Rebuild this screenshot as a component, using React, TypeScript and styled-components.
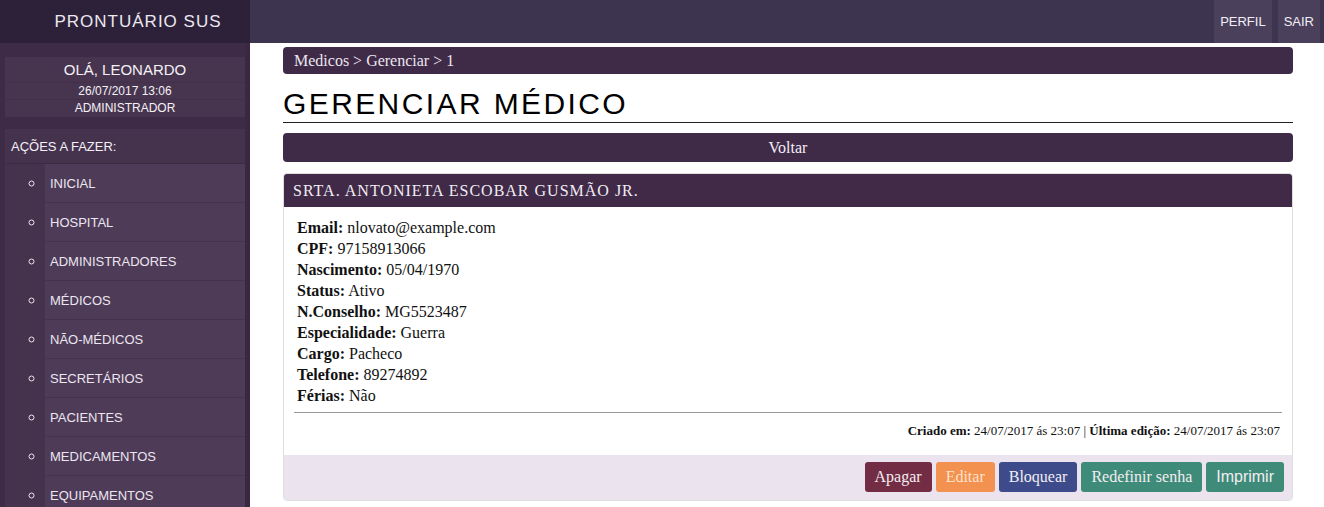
import React from "react";
import styled, { createGlobalStyle } from "styled-components";

const GlobalStyle = createGlobalStyle`
  html, body {
    margin: 0;
    padding: 0;
    background: #fff;
  }
  body {
    font-family: "Liberation Serif", "Times New Roman", serif;
  }
`;

// estrutura geral
const Page = styled.div`
  display: grid;
  grid-template-columns: 250px 1fr;
  grid-template-rows: 43px 1fr;
  width: 1324px;
  height: 507px;
  overflow: hidden;
`;

// barra superior
const Brand = styled.div`
  background: #2c2139;
  color: #ece8f0;
  font-family: "Liberation Sans", Arial, sans-serif;
  font-size: 17px;
  letter-spacing: 1px;
  display: flex;
  align-items: center;
  justify-content: center;
  padding-left: 26px;
`;

const TopBar = styled.nav`
  background: #3d3450;
  display: flex;
  justify-content: flex-end;
  align-items: stretch;
  padding-right: 4px;
  gap: 6px;
`;

const TopLink = styled.a`
  background: #4a405c;
  color: #f2eff5;
  font-family: "Liberation Sans", Arial, sans-serif;
  font-size: 13px;
  display: flex;
  align-items: center;
  padding: 0 6px;
  text-decoration: none;
`;

// menu lateral
const Sidebar = styled.aside`
  background: #3e2b47;
  border-right: 5px solid #3a2843;
  padding: 14px 0 0 5px;
  color: #f4f0f6;
  font-family: "Liberation Sans", Arial, sans-serif;
  overflow: hidden;
`;

const UserBox = styled.div`
  background: #47354f;
  text-align: center;
  margin-bottom: 12px;
`;

const UserRow = styled.div<{ $big?: boolean }>`
  font-size: ${(p) => (p.$big ? "15px" : "12px")};
  height: ${(p) => (p.$big ? "25px" : "16px")};
  line-height: ${(p) => (p.$big ? "26px" : "16px")};
  border-bottom: 1px solid #42304a;
  &:last-child {
    border-bottom: none;
    height: 17px;
  }
`;

const ActionsTitle = styled.div`
  background: #45334e;
  font-size: 13px;
  height: 34px;
  line-height: 35px;
  padding-left: 6px;
  border-bottom: 1px solid #3c2a45;
`;

const Menu = styled.ul`
  margin: 0;
  padding: 0 0 0 40px;
  background: #45334d;
  list-style: circle;
  color: #ece6f0;
`;

const MenuItem = styled.li`
  background: #4e3b57;
  height: 38px;
  line-height: 38px;
  border-bottom: 1px solid #45324d;
  font-size: 13px;
  padding-left: 5px;
  &::marker {
    font-size: 16px;
  }
`;

// conteúdo
const Main = styled.main`
  padding: 4px 31px 0 33px;
  overflow: hidden;
`;

const Breadcrumb = styled.div`
  background: #3f2a48;
  color: #ebe6ee;
  border-radius: 4px;
  height: 27px;
  line-height: 27px;
  padding-left: 11px;
  font-size: 16px;
`;

const Title = styled.h1`
  margin: 12px 0 10px;
  font-family: "Liberation Sans", Arial, sans-serif;
  font-weight: normal;
  font-size: 30px;
  letter-spacing: 2.4px;
  line-height: 36px;
  border-bottom: 1px solid #222;
  padding-bottom: 0;
  color: #000;
`;

const BackButton = styled.button`
  display: block;
  width: 100%;
  height: 29px;
  border: none;
  border-radius: 4px;
  background: #3f2a48;
  color: #f2eef4;
  font-family: "Liberation Serif", "Times New Roman", serif;
  font-size: 16px;
  margin-bottom: 11px;
`;

const Card = styled.section`
  border: 1px solid #ddd;
  border-radius: 4px;
  overflow: hidden;
`;

const CardHeader = styled.div`
  background: #402a48;
  color: #f1edf3;
  height: 33px;
  line-height: 33px;
  padding-left: 9px;
  font-size: 16px;
  letter-spacing: 1px;
`;

const CardBody = styled.div`
  padding: 10px 10px 0 10px;
`;

const Fields = styled.div`
  padding-left: 3px;
  font-size: 16px;
  line-height: 21px;
  color: #111;
  padding-bottom: 6px;
  border-bottom: 1px solid #999;
`;

const Meta = styled.div`
  text-align: right;
  font-size: 13px;
  color: #111;
  padding: 10px 2px 16px 0;
`;

const CardFooter = styled.div`
  background: #ebe4ef;
  display: flex;
  justify-content: flex-end;
  gap: 4px;
  padding: 7px 8px 8px;
`;

const ActionButton = styled.button<{ $bg: string; $fg?: string; $sans?: boolean }>`
  background: ${(p) => p.$bg};
  color: ${(p) => p.$fg || "#f3eef2"};
  border: none;
  border-radius: 3px;
  height: 30px;
  padding: 0 10px;
  font-family: ${(p) =>
    p.$sans
      ? '"Liberation Sans", Arial, sans-serif'
      : '"Liberation Serif", "Times New Roman", serif'};
  font-size: 16px;
`;

const menu = [
  "INICIAL",
  "HOSPITAL",
  "ADMINISTRADORES",
  "MÉDICOS",
  "NÃO-MÉDICOS",
  "SECRETÁRIOS",
  "PACIENTES",
  "MEDICAMENTOS",
  "EQUIPAMENTOS",
];

const fields: [string, string][] = [
  ["Email", "nlovato@example.com"],
  ["CPF", "97158913066"],
  ["Nascimento", "05/04/1970"],
  ["Status", "Ativo"],
  ["N.Conselho", "MG5523487"],
  ["Especialidade", "Guerra"],
  ["Cargo", "Pacheco"],
  ["Telefone", "89274892"],
  ["Férias", "Não"],
];

const App = () => {
  return (
    <>
      <GlobalStyle />
      <Page>
        <Brand>PRONTUÁRIO SUS</Brand>
        <TopBar>
          <TopLink href="#">PERFIL</TopLink>
          <TopLink href="#">SAIR</TopLink>
        </TopBar>
        <Sidebar>
          <UserBox>
            <UserRow $big>OLÁ, LEONARDO</UserRow>
            <UserRow>26/07/2017 13:06</UserRow>
            <UserRow>ADMINISTRADOR</UserRow>
          </UserBox>
          <ActionsTitle>AÇÕES A FAZER:</ActionsTitle>
          <Menu>
            {menu.map((m) => (
              <MenuItem key={m}>{m}</MenuItem>
            ))}
          </Menu>
        </Sidebar>
        <Main>
          <Breadcrumb>Medicos &gt; Gerenciar &gt; 1</Breadcrumb>
          <Title>GERENCIAR MÉDICO</Title>
          <BackButton>Voltar</BackButton>
          <Card>
            <CardHeader>SRTA. ANTONIETA ESCOBAR GUSMÃO JR.</CardHeader>
            <CardBody>
              <Fields>
                {fields.map(([k, v]) => (
                  <div key={k}>
                    <b>{k}:</b> {v}
                  </div>
                ))}
              </Fields>
              <Meta>
                <b>Criado em:</b> 24/07/2017 ás 23:07 | <b>Última edição:</b>{" "}
                24/07/2017 ás 23:07
              </Meta>
            </CardBody>
            <CardFooter>
              <ActionButton $bg="#722c43">Apagar</ActionButton>
              <ActionButton $bg="#f39150" $fg="#fde2cc">
                Editar
              </ActionButton>
              <ActionButton $bg="#3d4b8a">Bloquear</ActionButton>
              <ActionButton $bg="#3f8b79">Redefinir senha</ActionButton>
              <ActionButton $bg="#3f8b79" $sans>
                Imprimir
              </ActionButton>
            </CardFooter>
          </Card>
        </Main>
      </Page>
    </>
  );
};

export default App;
